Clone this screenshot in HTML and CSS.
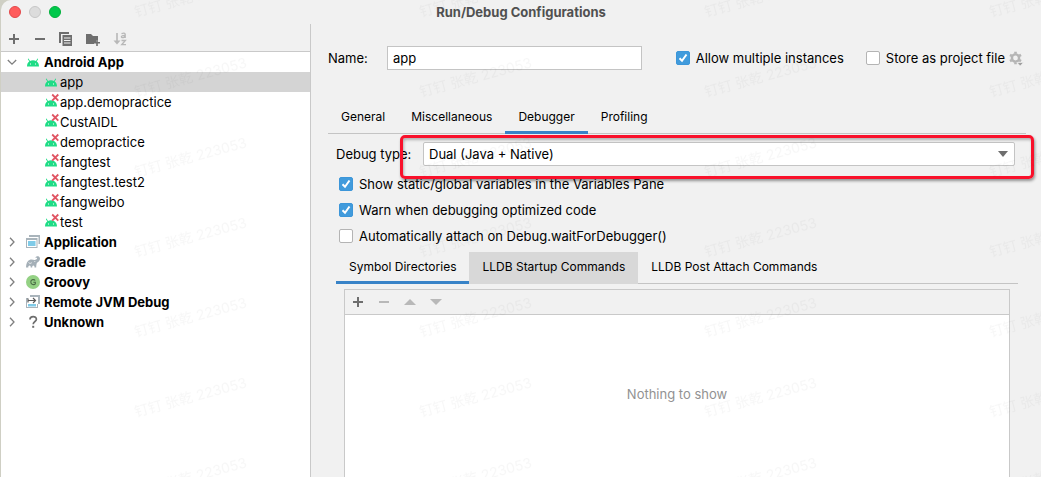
FILE: index.html
```html
<!DOCTYPE html>
<html lang="en">
<head>
<meta charset="utf-8">
<title>Run/Debug Configurations</title>
<link rel="stylesheet" href="styles.css">
</head>
<body>
<svg class="defs" aria-hidden="true">
  <symbol id="android" viewBox="0 0 14 14">
    <path d="M1 11.500C1 8.900 2 7.400 3.300 6.500L1.800 4l.7-.5L4 6c1.800-.9 4.200-.9 6 0l1.500-2.500.7.500L10.700 6.500C12 7.400 13 8.900 13 11.500z" fill="#1fdc86"/>
    <path d="M4 8.500h1v1H4zM9 8.500h1v1H9z" fill="#fff"/>
  </symbol>
  <symbol id="android-off" viewBox="0 0 16 20">
    <path d="M1 14.500C1 11.900 2 10.400 3.300 9.500L1.800 7l.7-.5L4 9c1.800-.9 4.200-.9 6 0C12 10.400 13 11.900 13 14.500z" fill="#1fdc86"/>
    <path d="M4 11.500h1v1H4zM9 11.500h1v1H9z" fill="#fff"/>
    <path d="M8.200 2.500l6.100 6.100M14.300 2.500L8.200 8.600" stroke="#e05563" stroke-width="1.800"/>
  </symbol>
  <symbol id="right" viewBox="0 0 10 10"><path d="M3 .8L7 5 3 9.200" fill="none" stroke="#7f7f7f" stroke-width="1.300"/></symbol>
  <symbol id="plus" viewBox="0 0 14 14"><path d="M7 2v10M2 7h10" stroke="currentColor" stroke-width="2"/></symbol>
  <symbol id="minus" viewBox="0 0 14 14"><path d="M2 7h10" stroke="currentColor" stroke-width="2"/></symbol>
</svg>

<div class="window">
  <header class="titlebar">
    <div class="lights"><button class="light close" aria-label="Close"></button><button class="light minimize" aria-label="Minimize"></button><button class="light maximize" aria-label="Zoom"></button></div>
    <h1 class="title">Run/Debug Configurations</h1>
  </header>

  <aside class="sidebar">
    <div class="toolbar">
      <button class="tool" aria-label="Add"><svg width="14" height="14"><use href="#plus"/></svg></button>
      <button class="tool" aria-label="Remove"><svg width="14" height="14"><use href="#minus"/></svg></button>
      <button class="tool" aria-label="Copy"><svg width="14" height="14" viewBox="0 0 14 14"><path d="M1 11V1h9" fill="none" stroke="#6e6e6e" stroke-width="2"/><path d="M3.500 3H13v11H3.500z" fill="#6e6e6e"/><path d="M5 6h6.500M5 8.500h6.500M5 11h6.500" stroke="#f2f2f2"/></svg></button>
      <button class="tool" aria-label="New folder"><svg width="16" height="14" viewBox="0 0 16 14"><path d="M1 2h5l2 2h5v4h-2v2H9v2H1z" fill="#6e6e6e"/><path d="M12 7.500V14M9 10.800h6" stroke="#6e6e6e" stroke-width="1.600"/></svg></button>
      <button class="tool disabled" aria-label="Sort" disabled><svg width="16" height="14" viewBox="0 0 16 14"><path d="M4 1v9" stroke="#b8b8b8" stroke-width="1.600"/><path d="M.5 8.500h7L4 12.500z" fill="#b8b8b8"/><path d="M8.500 1.700q3.300-1.400 3.700.5V6M12 3.300c-4.500-.2-4.500 2.700-1.700 2.400Q12 5.200 12 4M8.500 8.500h3.900L8.700 12.700h4.300" fill="none" stroke="#b8b8b8" stroke-width="1.300"/></svg></button>
    </div>
    <ul class="tree">
      <li class="row group"><svg class="arrow" viewBox="0 0 10 10"><path d="M.8 3L5 7.200 9.200 3" fill="none" stroke="#7f7f7f" stroke-width="1.300"/></svg><svg class="icon" viewBox="0 0 14 14"><use href="#android"/></svg>Android App</li>
      <li class="row child selected"><svg class="icon" viewBox="0 0 14 14"><use href="#android"/></svg>app</li>
      <li class="row child"><svg class="icon-off"><use href="#android-off"/></svg>app.demopractice</li>
      <li class="row child"><svg class="icon-off"><use href="#android-off"/></svg>CustAIDL</li>
      <li class="row child"><svg class="icon-off"><use href="#android-off"/></svg>demopractice</li>
      <li class="row child"><svg class="icon-off"><use href="#android-off"/></svg>fangtest</li>
      <li class="row child"><svg class="icon-off"><use href="#android-off"/></svg>fangtest.test2</li>
      <li class="row child"><svg class="icon-off"><use href="#android-off"/></svg>fangweibo</li>
      <li class="row child"><svg class="icon-off"><use href="#android-off"/></svg>test</li>
      <li class="row group"><svg class="arrow"><use href="#right"/></svg><svg class="icon" viewBox="0 0 14 14"><path d="M3 0H14v9h-1.500V2H3zM0 3h11.500V13H0z" fill="#a9b4bb"/><path d="M1 5h9.500v7H1z" fill="#fff"/><path d="M2 6h7.500v5H2z" fill="#7fcbe8"/></svg>Application</li>
      <li class="row group"><svg class="arrow"><use href="#right"/></svg><svg class="icon" viewBox="0 0 14 14"><path d="M0 12.500C.1 8.500 1.200 5.600 4 4.800c2-.6 3.500.3 5 .1 1.500-.2 2.300-1 2.100-1.800-.2-.6-1-.6-1.500-.1C9 1.500 12.600.3 13.700 2.500c.9 2-.6 4.300-2.700 5.200-.6 1.200-.7 2.900-.8 4.800H8.500c0-1.200-.2-1.900-1.100-1.900s-1.200.7-1.200 1.900H4.700c0-1.200-.3-1.900-1.100-1.900-.9 0-1.300.7-1.300 1.900z" fill="#a4afb7"/><path d="M2.500 7.500Q4 9.500 5.800 7.700M8.300 6.500h1" fill="none" stroke="#fff" stroke-width=".7"/></svg>Gradle</li>
      <li class="row group"><svg class="arrow"><use href="#right"/></svg><svg class="icon" viewBox="0 0 14 14"><circle cx="7" cy="7" r="7" fill="#94d184"/><path d="M9.200 5.500C8.300 4.200 4.800 4 4.800 7s3.600 3 4.500 1.800V7.200H7.300" fill="none" stroke="#4a6b46" stroke-width="1.100"/></svg>Groovy</li>
      <li class="row group"><svg class="arrow"><use href="#right"/></svg><svg class="icon" viewBox="0 0 14 14"><path d="M4 0h10v9h-2V2H4zM0 3h2v1H1v8h10V9h1v4H0z" fill="#a9b4bb"/><path d="M2 9h8v2.500H2z" fill="#7fcbe8"/><path d="M2 3.500v4M2 5.500h7M7 3l2.500 2.500L7 8" fill="none" stroke="#595959" stroke-width="1.200"/></svg>Remote JVM Debug</li>
      <li class="row group"><svg class="arrow"><use href="#right"/></svg><svg class="icon" viewBox="0 0 14 14"><path d="M4 4.500C4 .7 10.400.7 10.400 4.300 10.400 6.500 7.200 6.500 7.200 9.200" fill="none" stroke="#6e6e6e" stroke-width="1.700"/><path d="M6.200 10.800h2v2h-2z" fill="#6e6e6e"/></svg>Unknown</li>
    </ul>
  </aside>

  <main class="content">
    <div class="name-row">
      <label class="name-label" for="name">Name:</label>
      <input class="name-input" id="name" type="text" value="app">
      <div class="name-options">
        <label class="check"><input type="checkbox" checked>Allow multiple instances</label>
        <div class="store">
          <label class="check"><input type="checkbox">Store as project file</label>
          <button class="tool" aria-label="Storage options"><svg width="15" height="15" viewBox="0 0 15 15"><circle cx="6.500" cy="7" r="3.600" fill="none" stroke="#b5b5b5" stroke-width="2.400"/><path d="M6.500 .7v2M6.500 11.300v2M1 3.800l1.700 1M10.300 9.200l1.700 1M1 10.200l1.700-1M10.300 4.800l1.700-1" stroke="#b5b5b5" stroke-width="2.600"/><path d="M8 11.500h6.500L11.200 15z" fill="#a0a0a0" stroke="#f1f1f1" stroke-width=".7"/></svg></button>
        </div>
      </div>
    </div>

    <nav class="tabs" role="tablist">
      <button class="tab" role="tab">General</button>
      <button class="tab" role="tab">Miscellaneous</button>
      <button class="tab active" role="tab" aria-selected="true">Debugger</button>
      <button class="tab" role="tab">Profiling</button>
    </nav>

    <section class="debugger">
      <div class="type-row">
        <label class="type-label" for="type">Debug type:</label>
        <select class="type-select" id="type"><option>Dual (Java + Native)</option></select>
        <div class="highlight"></div>
      </div>
      <div class="checks">
        <label class="check"><input type="checkbox" checked>Show static/global variables in the Variables Pane</label>
        <label class="check"><input type="checkbox" checked>Warn when debugging optimized code</label>
        <label class="check"><input type="checkbox">Automatically attach on Debug.waitForDebugger()</label>
      </div>
      <nav class="tabs" role="tablist">
        <button class="tab active" role="tab" aria-selected="true">Symbol Directories</button>
        <button class="tab hovered" role="tab">LLDB Startup Commands</button>
        <button class="tab" role="tab">LLDB Post Attach Commands</button>
      </nav>
      <div class="list">
        <div class="list-tools">
          <button class="tool" aria-label="Add directory"><svg width="14" height="14"><use href="#plus"/></svg></button>
          <button class="tool disabled" aria-label="Remove directory" disabled><svg width="14" height="14"><use href="#minus"/></svg></button>
          <button class="tool disabled" aria-label="Move up" disabled><svg width="14" height="14" viewBox="0 0 14 14"><path d="M1 10l6-6 6 6z" fill="currentColor"/></svg></button>
          <button class="tool disabled" aria-label="Move down" disabled><svg width="14" height="14" viewBox="0 0 14 14"><path d="M1 4l6 6 6-6z" fill="currentColor"/></svg></button>
        </div>
        <div class="list-body">Nothing to show</div>
      </div>
    </section>
  </main>
</div>

<svg class="watermark" aria-hidden="true">
  <defs><pattern id="mark" x="120" y="50" width="285" height="80" patternUnits="userSpaceOnUse"><text class="mark-text" transform="translate(16 47) rotate(-15)">钉钉 张乾 223053</text></pattern></defs>
  <rect width="100%" height="100%" fill="url(#mark)"/>
</svg>
</body>
</html>
```
FILE: styles.css
```css
* { box-sizing: border-box; }

body {
  margin: 0;
  background: #cfcfc4;
  color: #000;
  font: 13px/20px Inter, "Noto Sans CJK SC", sans-serif;
}

button, input, select { font: inherit; color: inherit; }
.defs { position: absolute; width: 0; height: 0; }

.window {
  display: grid;
  grid-template: 24px 1fr / 310px 1fr;
  min-height: 100vh;
  margin-left: 1px;
  overflow: hidden;
  background: #f1f1f1;
  border-top-left-radius: 10px;
}

.titlebar {
  grid-column: 1 / -1;
  display: grid;
  grid-template-columns: 1fr auto 1fr;
  align-items: center;
}
.lights { display: flex; gap: 8px; padding-left: 8px; }
.light { width: 12px; height: 12px; padding: 0; border: 1px solid; border-radius: 50%; }
.close { background: #ff5c5c; border-color: #e2484a; }
.minimize { background: #dcdcdc; border-color: #c6c6c6; }
.maximize { background: #00c84b; border-color: #00b03c; }
.title { margin: 0; color: #505050; font-size: 13px; font-weight: 700; line-height: 24px; }

.sidebar { display: flex; flex-direction: column; border-right: 1px solid #c9c9c9; }
.toolbar { display: flex; align-items: center; gap: 12px; height: 28px; padding: 2px 6px 0; border-bottom: 1px solid #c9c9c9; }
.tool { display: grid; place-items: center; padding: 0; border: 0; background: none; color: #6e6e6e; }
.tool.disabled { color: #b8b8b8; }

.tree { flex: 1; margin: 0; padding: 0; list-style: none; background: #fff; }
.row { display: flex; align-items: center; height: 20px; }
.group { padding-left: 6px; font-weight: 700; }
.child { padding-left: 43px; }
.selected { background: #d4d4d4; }
.arrow { width: 10px; height: 10px; margin-right: 9px; }
.icon { width: 14px; height: 14px; margin-right: 4px; }
.child .icon { margin-right: 2px; }
.icon-off { width: 16px; height: 20px; }

.content { display: flex; flex-direction: column; padding: 22px 15px 0 17px; }
.name-row { display: flex; align-items: center; margin-bottom: 32px; }
.name-label { width: 59px; }
.name-input { width: 255px; height: 24px; padding: 0 5px; border: 1px solid #c4c4c4; background: #fff; }
.name-options { display: flex; gap: 22px; margin-left: auto; padding-right: 2px; }
.store { display: flex; gap: 4px; }

.check { display: flex; align-items: center; gap: 6px; }
.check input {
  appearance: none;
  width: 14px;
  height: 14px;
  margin: 0;
  border: 1px solid #b4b4b4;
  border-radius: 2px;
  background: #fff;
}
.check input:checked {
  border-color: #3c96d9;
  background: #419bdc url("data:image/svg+xml,%3Csvg xmlns='http://www.w3.org/2000/svg' viewBox='0 0 12 12'%3E%3Cpath d='M2.500 6.200L5 8.800 9.500 2.500' fill='none' stroke='white' stroke-width='2'/%3E%3C/svg%3E");
}

.tabs { display: flex; height: 32px; border-bottom: 1px solid #c4c4c4; }
.tab { height: 32px; padding: 0 13px; border: 0; border-bottom: 3px solid transparent; background: none; font-size: 12px; }
.tab.active { border-bottom-color: #3883c7; }
.tab.hovered { background: #d8d8d8; box-shadow: inset 0 -1px #d8d8d8; }

.debugger { flex: 1; display: flex; flex-direction: column; padding: 8px 8px 0; }
.type-row { position: relative; display: flex; align-items: center; }
.type-label { width: 87px; }
.type-select {
  flex: 1;
  height: 24px;
  margin-right: 3px;
  padding: 0 5px;
  appearance: none;
  border: 1px solid #c4c4c4;
  border-radius: 2px;
  background: #fff url("data:image/svg+xml,%3Csvg xmlns='http://www.w3.org/2000/svg' width='10' height='6'%3E%3Cpath d='M0 0h10L5 6z' fill='%236e6e6e'/%3E%3C/svg%3E") no-repeat right 6px center;
}
.highlight {
  position: absolute;
  inset: -7px -16px -13px 64px;
  border: 3px solid #f9112b;
  border-radius: 5px;
  box-shadow: 1px 2px 3px #0006, inset 1px 2px 3px #0004;
  pointer-events: none;
}
.checks { display: grid; gap: 6px; padding: 8px 3px 6px; }
.list { flex: 1; display: flex; flex-direction: column; margin: 5px 8px 0; border: 1px solid #c9c9c9; border-bottom: 0; }
.list-tools { display: flex; align-items: center; gap: 12px; height: 25px; padding-left: 6px; border-bottom: 1px solid #c9c9c9; }
.list-body { flex: 1; padding-top: 69px; background: #fff; color: #929292; text-align: center; }

.watermark { position: absolute; inset: 0; width: 100%; height: 100%; pointer-events: none; }
.mark-text { font-family: Inter, "Noto Sans CJK SC", sans-serif; font-size: 14px; fill: #000; fill-opacity: .03; }
```
